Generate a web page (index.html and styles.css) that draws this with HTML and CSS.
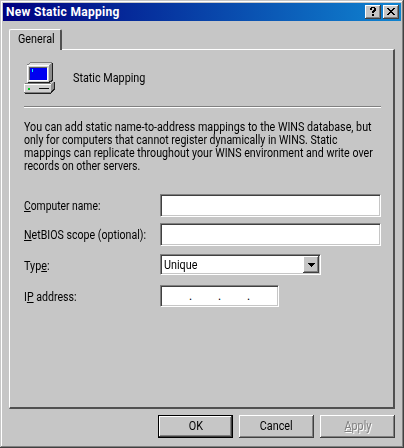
FILE: index.html
```html
<!DOCTYPE html>
<html lang="en">
<head>
<meta charset="utf-8">
<title>New Static Mapping</title>
<link rel="stylesheet" href="styles.css">
</head>
<body>
<main class="window">
  <header class="titlebar">
    <h1 class="title">New Static Mapping</h1>
    <button class="caption-btn" aria-label="Help"><svg width="12" height="10" viewBox="0 0 12 10" shape-rendering="crispEdges"><path d="M3 0h5v1h1v3h-1v1h-1v1h-2v-2h1v-1h1v-2h-2v2h-2v-2h1zM5 7h2v2h-2z"/></svg></button>
    <button class="caption-btn close" aria-label="Close"><svg width="12" height="10" viewBox="0 0 12 10" shape-rendering="crispEdges"><path d="M2 1h2v1h1v1h2v-1h1v-1h2v1h-1v1h-1v1h-1v1h1v1h1v1h1v1h-2v-1h-1v-1h-2v1h-1v1h-2v-1h1v-1h1v-1h1v-1h-1v-1h-1v-1h-1z"/></svg></button>
  </header>
  <div class="tabs"><div class="tab"><span class="text">General</span></div></div>
  <section class="page">
    <div class="heading">
      <svg class="computer" width="32" height="32" viewBox="0 0 32 32" shape-rendering="crispEdges">
        <!-- monitor: top, side, front, screen -->
        <path fill="#808080" d="M6 0h22v1h-22zM5 1h1v1h-1zM3 2h2v1h-2z"/>
        <path fill="#dcdcdc" d="M6 1h21v1h-1v1h-21v-1h1z"/>
        <path fill="#8c8c8c" d="M25 3h1v-1h1v-1h1v18h-1v1h-2z"/>
        <path fill="#202020" d="M28 1h1v18h-1v1h-2v1h-22v-1h21v-1h2v-1h1z"/>
        <path fill="#cfcfcf" d="M3 3h22v17h-22z"/>
        <path fill="#fff" d="M3 3h22v1h-21v16h-1z"/>
        <path fill="#606060" d="M5 5h18v1h-17v12h-1z"/>
        <path fill="#fff" d="M5 18h18v-12h1v13h-19z"/>
        <path fill="#0000f0" d="M6 6h17v12h-17z"/>
        <path fill="#0ff" d="M8 7h1v3h-1z"/>
        <!-- base: side, front, slot, light -->
        <path fill="#8c8c8c" d="M27 22h1v-1h1v-1h1v7h-1v1h-1v1h-1z"/>
        <path fill="#808080" d="M1 21h26v1h-26z"/>
        <path fill="#202020" d="M30 20h1v8h-1v1h-1v1h-1v1h-1v1h-26v-1h25v-1h1v-1h1v-1h1v-1h1z"/>
        <path fill="#cfcfcf" d="M0 22h27v9h-27z"/>
        <path fill="#fff" d="M0 22h27v1h-26v7h-1z"/>
        <path fill="#808080" d="M0 30h27v1h-27z"/>
        <path fill="#101010" d="M15 26h10v1h-10z"/>
        <path fill="#00c820" d="M4 26h2v2h-2z"/>
      </svg>
      <span class="text">Static Mapping</span>
    </div>
    <div class="separator"></div>
    <p class="intro">
      <span class="text l1">You can add static name-to-address mappings to the WINS database, but</span>
      <span class="text l2">only for computers that cannot register dynamically in WINS. Static</span>
      <span class="text l3">mappings can replicate throughout your WINS environment and write over</span>
      <span class="text l4">records on other servers.</span>
    </p>
    <form class="form">
      <label class="text name"><u>C</u>omputer name:</label><div class="field"></div>
      <label class="text scope"><u>N</u>etBIOS scope (optional):</label><div class="field"></div>
      <label class="text">Typ<u>e</u>:</label>
      <div class="field combo"><span class="text value">Unique</span><span class="drop"><svg width="7" height="4" viewBox="0 0 7 4" shape-rendering="crispEdges"><path d="M0 0h7v1h-1v1h-1v1h-1v1h-1v-1h-1v-1h-1v-1h-1z"/></svg></span></div>
      <label class="text scope">I<u>P</u> address:</label>
      <div class="field ip"><span>.</span><span>.</span><span>.</span></div>
    </form>
  </section>
  <footer class="buttons">
    <button class="btn default"><span class="text">OK</span></button>
    <button class="btn"><span class="text">Cancel</span></button>
    <button class="btn disabled" disabled><span class="text"><u>A</u>pply</span></button>
  </footer>
</main>
</body>
</html>
```

FILE: styles.css
```css
* { box-sizing: border-box; }
body { margin: 0; font: 12px/13px Roboto, "Liberation Sans", sans-serif; color: #000; overflow: hidden; }
button { font: inherit; color: inherit; padding: 0; border: 0; }
svg { display: block; }
u { text-underline-offset: 1px; text-decoration-thickness: 1px; text-decoration-skip-ink: none; }

/* condensed dialog lettering */
.text { display: block; width: max-content; white-space: nowrap; transform: scaleX(.9); transform-origin: 0 50%; }

.window {
  width: 404px; height: 448px; padding: 3px;
  background: #c6c6c6;
  box-shadow: inset -1px -1px #404040, inset 1px 1px #c6c6c6, inset -2px -2px #808080, inset 2px 2px #fff;
  overflow: hidden;
}
.titlebar {
  display: flex; align-items: center; height: 18px; padding: 0 2px 0 3px;
  background: linear-gradient(90deg, #000080, #1084d0);
}
.title { flex: 1; margin: 0; color: #fff; font-size: 12px; font-weight: 700; line-height: 18px; white-space: nowrap; letter-spacing: .3px; }
.caption-btn {
  display: flex; align-items: center; justify-content: center; width: 16px; height: 14px;
  background: #c6c6c6;
  box-shadow: inset -1px -1px #404040, inset 1px 1px #fff, inset -2px -2px #808080;
}
.close { margin-left: 2px; }

.tabs { display: flex; height: 28px; padding: 8px 0 0 6px; }
.tab {
  position: relative; z-index: 1; width: 53px; height: 21px; padding: 3px 0 0 8px;
  background: #c6c6c6; border: solid; border-width: 1px 2px 0 1px;
  border-color: #fff #505050 #fff #fff; border-radius: 2px 2px 0 0;
}
.page {
  width: 386px; height: 360px; margin-left: 6px; padding: 12px 12px 0 14px;
  border: solid; border-width: 1px 2px 2px 1px; border-color: #fff #505050 #505050 #fff;
}
.heading { display: flex; align-items: center; height: 32px; }
.computer { margin-right: 17px; }
.separator { width: 357px; height: 2px; margin-top: 12px; background: #808080; border-bottom: 1px solid #fff; }
.intro { margin: 13px 0 0; }
.l1 { transform: scaleX(.894); }
.l2 { transform: scaleX(.88); }
.l3 { transform: scaleX(.889); }
.l4 { transform: scaleX(.875); }

.form {
  display: grid; grid-template-columns: 136px 221px; grid-template-rows: 29px 31px 31px 22px;
  align-items: start; margin-top: 21px;
}
.form label { padding-top: 6px; }
.name { transform: scaleX(.86); }
.scope { transform: scaleX(.885); }
.field {
  height: 23px; background: #fff; border: solid 1px; border-color: #808080 #fff #fff #808080;
  box-shadow: inset 1px 1px #404040, inset -1px -1px #c6c6c6;
}
.combo { display: flex; justify-content: space-between; width: 161px; height: 21px; padding: 1px 1px 1px 3px; }
.value { line-height: 19px; }
.drop {
  display: flex; align-items: center; justify-content: center; width: 16px; height: 17px; background: #c6c6c6;
  box-shadow: inset -1px -1px #404040, inset 1px 1px #fff, inset -2px -2px #808080;
}
.ip { display: flex; width: 119px; height: 22px; padding: 4px 0 0 28px; }
.ip span { width: 29px; }

.buttons { display: flex; justify-content: flex-end; gap: 6px; padding: 6px 6px 0 0; }
.btn {
  width: 75px; height: 23px; background: #c6c6c6;
  box-shadow: inset -1px -1px #404040, inset 1px 1px #fff, inset -2px -2px #808080;
}
.btn .text { margin: 0 auto; transform-origin: 50% 50%; }
.default { border: 1px solid #000; }
.disabled { color: #808080; text-shadow: 1px 1px #fff; }
```
